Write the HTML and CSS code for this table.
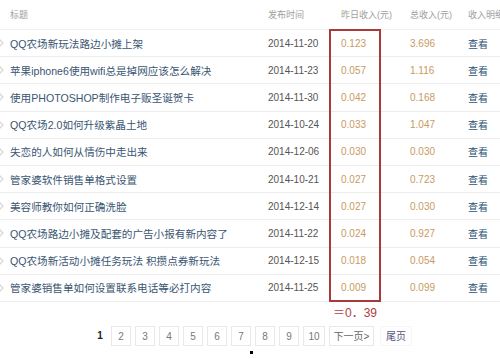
FILE: index.html
```html
<!DOCTYPE html>
<html lang="zh-CN">
<head>
<meta charset="utf-8">
<link rel="stylesheet" href="styles.css">
</head>
<body>
<div class="table">
  <div class="row head">
    <div class="c1">标题</div>
    <div class="c2">发布时间</div>
    <div class="c3">昨日收入(元)</div>
    <div class="c4">总收入(元)</div>
    <div class="c5">收入明细</div>
  </div>
  <div class="row"><div class="c1"><svg class="chev" width="4" height="8" viewBox="0 0 4 8"><polyline points="-1,0 3,4 -1,8" fill="none" stroke="#d8d8d8" stroke-width="1.3"/></svg><span class="t">QQ农场新玩法路边小摊上架</span></div><div class="c2">2014-11-20</div><div class="c3">0.123</div><div class="c4">3.696</div><div class="c5">查看</div></div>
  <div class="row"><div class="c1"><svg class="chev" width="4" height="8" viewBox="0 0 4 8"><polyline points="-1,0 3,4 -1,8" fill="none" stroke="#d8d8d8" stroke-width="1.3"/></svg><span class="t">苹果iphone6使用wifi总是掉网应该怎么解决</span></div><div class="c2">2014-11-23</div><div class="c3">0.057</div><div class="c4">1.116</div><div class="c5">查看</div></div>
  <div class="row"><div class="c1"><svg class="chev" width="4" height="8" viewBox="0 0 4 8"><polyline points="-1,0 3,4 -1,8" fill="none" stroke="#d8d8d8" stroke-width="1.3"/></svg><span class="t">使用PHOTOSHOP制作电子贩圣诞贺卡</span></div><div class="c2">2014-11-30</div><div class="c3">0.042</div><div class="c4">0.168</div><div class="c5">查看</div></div>
  <div class="row"><div class="c1"><svg class="chev" width="4" height="8" viewBox="0 0 4 8"><polyline points="-1,0 3,4 -1,8" fill="none" stroke="#d8d8d8" stroke-width="1.3"/></svg><span class="t">QQ农场2.0如何升级紫晶土地</span></div><div class="c2">2014-10-24</div><div class="c3">0.033</div><div class="c4">1.047</div><div class="c5">查看</div></div>
  <div class="row"><div class="c1"><svg class="chev" width="4" height="8" viewBox="0 0 4 8"><polyline points="-1,0 3,4 -1,8" fill="none" stroke="#d8d8d8" stroke-width="1.3"/></svg><span class="t">失恋的人如何从情伤中走出来</span></div><div class="c2">2014-12-06</div><div class="c3">0.030</div><div class="c4">0.030</div><div class="c5">查看</div></div>
  <div class="row"><div class="c1"><svg class="chev" width="4" height="8" viewBox="0 0 4 8"><polyline points="-1,0 3,4 -1,8" fill="none" stroke="#d8d8d8" stroke-width="1.3"/></svg><span class="t">管家婆软件销售单格式设置</span></div><div class="c2">2014-10-21</div><div class="c3">0.027</div><div class="c4">0.723</div><div class="c5">查看</div></div>
  <div class="row"><div class="c1"><svg class="chev" width="4" height="8" viewBox="0 0 4 8"><polyline points="-1,0 3,4 -1,8" fill="none" stroke="#d8d8d8" stroke-width="1.3"/></svg><span class="t">美容师教你如何正确洗脸</span></div><div class="c2">2014-12-14</div><div class="c3">0.027</div><div class="c4">0.030</div><div class="c5">查看</div></div>
  <div class="row"><div class="c1"><svg class="chev" width="4" height="8" viewBox="0 0 4 8"><polyline points="-1,0 3,4 -1,8" fill="none" stroke="#d8d8d8" stroke-width="1.3"/></svg><span class="t">QQ农场路边小摊及配套的广告小报有新内容了</span></div><div class="c2">2014-11-22</div><div class="c3">0.024</div><div class="c4">0.927</div><div class="c5">查看</div></div>
  <div class="row"><div class="c1"><svg class="chev" width="4" height="8" viewBox="0 0 4 8"><polyline points="-1,0 3,4 -1,8" fill="none" stroke="#d8d8d8" stroke-width="1.3"/></svg><span class="t">QQ农场新活动小摊任务玩法 积攒点券新玩法</span></div><div class="c2">2014-12-15</div><div class="c3">0.018</div><div class="c4">0.054</div><div class="c5">查看</div></div>
  <div class="row"><div class="c1"><svg class="chev" width="4" height="8" viewBox="0 0 4 8"><polyline points="-1,0 3,4 -1,8" fill="none" stroke="#d8d8d8" stroke-width="1.3"/></svg><span class="t">管家婆销售单如何设置联系电话等必打内容</span></div><div class="c2">2014-11-25</div><div class="c3">0.009</div><div class="c4">0.099</div><div class="c5">查看</div></div>
  <div class="redbox"></div>
</div>
<div class="sum">＝0．39</div>
<div class="pager">
  <span class="cur">1</span>
  <span class="pg">2</span>
  <span class="pg">3</span>
  <span class="pg">4</span>
  <span class="pg">5</span>
  <span class="pg">6</span>
  <span class="pg">7</span>
  <span class="pg">8</span>
  <span class="pg">9</span>
  <span class="pg wide">10</span>
  <span class="pg next">下一页&gt;</span>
  <span class="pg last">尾页</span>
</div>
<div class="dot"></div>
</body>
</html>
```
FILE: styles.css
```css
html, body {
  margin: 0;
  padding: 0;
  background: #fff;
}
body {
  width: 500px;
  height: 359px;
  overflow: hidden;
  font-family: "Liberation Sans", "Noto Sans CJK SC", sans-serif;
  color: #555;
}
.table {
  position: relative;
}
.row {
  display: grid;
  grid-template-columns: 262px 67px 52px 79px 40px;
  height: 26.2px;
  align-items: center;
  border-bottom: 1px solid #ececec;
}
.row.head {
  height: 29px;
  font-size: 9px;
  color: #a0a0a0;
  border-bottom-color: #f0f0f0;
}
.row > div {
  white-space: nowrap;
  overflow: hidden;
}
.row.head > div {
  overflow: visible;
}
.c1 {
  padding-left: 10px;
  display: flex;
  align-items: center;
}
.row:not(.head) .c1 {
  padding-left: 0;
}
.chev {
  flex: none;
  margin-right: 6px;
}
.t {
  font-size: 10.6px;
  color: #3a5672;
}
.c2 {
  padding-left: 6px;
  font-size: 10px;
  color: #555;
}
.c3 {
  padding-left: 12px;
  font-size: 10px;
  color: #c99a62;
}
.c4 {
  padding-left: 29px;
  font-size: 10px;
  color: #c99a62;
}
.c5 {
  padding-left: 8px;
  font-size: 10px;
  color: #2c5274;
}
.head .c2, .head .c3, .head .c4, .head .c5 {
  font-size: 9px;
  color: #a0a0a0;
}
.redbox {
  position: absolute;
  left: 329px;
  top: 29px;
  width: 48px;
  height: 269px;
  border: 2px solid #a83a3a;
}
.sum {
  height: 22px;
  line-height: 22px;
  padding-left: 333px;
  font-size: 12px;
  color: #b04040;
}
.pager {
  display: flex;
  gap: 4px;
  padding-left: 93px;
  margin-top: 2px;
  height: 20px;
  align-items: center;
  font-size: 10px;
}
.pager span {
  height: 20px;
  line-height: 20px;
  text-align: center;
  box-sizing: border-box;
}
.cur {
  width: 14px;
  font-weight: bold;
  color: #222;
}
.pg {
  width: 20px;
  border: 1px solid #e8e8e8;
  color: #777;
}
.pg.wide {
  width: 22px;
}
.pg.next {
  width: 45px;
  color: #666;
}
.pg.last {
  width: 32px;
  margin-left: 2px;
  border-color: #f6f6f6;
  color: #557;
}
.dot {
  width: 3px;
  height: 3px;
  background: #000;
  margin: 5px 0 0 250px;
}
```
